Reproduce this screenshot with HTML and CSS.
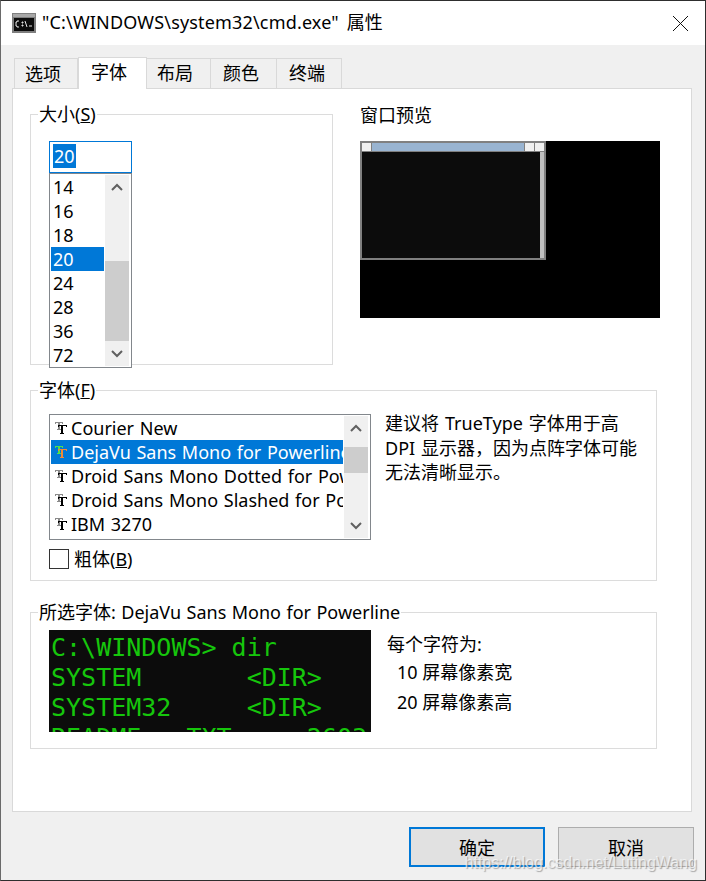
FILE: index.html
```html
<!DOCTYPE html>
<html lang="zh-CN">
<head>
<meta charset="utf-8">
<title>"C:\WINDOWS\system32\cmd.exe" 属性</title>
<link rel="stylesheet" href="styles.css">
</head>
<body>
<div class="window">
  <header class="titlebar">
    <svg class="app-icon" width="24" height="20" viewBox="0 0 24 20"><rect width="24" height="20" fill="#7f7f7f"/><rect x="1" y="1" width="22" height="3" fill="#a8a8a8"/><rect x="2" y="5" width="20" height="13" fill="#0c0c0c"/><path d="M7 8H5v1H4v4h1v1h2M10 9h1v1h-1zM10 12h1v1h-1zM13 8l2 6M17 13h3" stroke="#e8e8e8" stroke-width="1" fill="none"/></svg>
    <span class="title-text">"C:\WINDOWS\system32\cmd.exe" 属性</span>
    <svg class="close" width="15" height="15" viewBox="0 0 15 15"><path d="M0 0l15 15M15 0L0 15" stroke="#111" stroke-width="1" fill="none"/></svg>
  </header>
  <main class="content">
    <nav class="tabs">
      <div class="tab tab-1">选项</div>
      <div class="tab tab-2 active">字体</div>
      <div class="tab tab-3">布局</div>
      <div class="tab tab-4">颜色</div>
      <div class="tab tab-5">终端</div>
    </nav>
    <section class="panel">
      <div class="top-row">
        <div class="group size-group">
          <span class="legend">大小(<u>S</u>)</span>
          <div class="size-input"><span class="sel-text">20</span></div>
          <div class="listbox size-list">
            <div class="items size-items">
              <div class="item">14</div>
              <div class="item">16</div>
              <div class="item">18</div>
              <div class="item selected">20</div>
              <div class="item">24</div>
              <div class="item">28</div>
              <div class="item">36</div>
              <div class="item">72</div>
            </div>
            <div class="scrollbar">
              <svg class="arrow" width="24" height="24" viewBox="0 0 24 24"><path d="M7 15l5-5 5 5" class="chev"/></svg>
              <div class="track size-track"><div class="thumb size-thumb"></div></div>
              <svg class="arrow" width="24" height="24" viewBox="0 0 24 24"><path d="M7 9l5 5 5-5" class="chev"/></svg>
            </div>
          </div>
        </div>
        <div class="preview-col">
          <div class="preview-label">窗口预览</div>
          <div class="screen">
            <div class="mini-window">
              <div class="mini-title">
                <span class="mini-btn"></span><span class="mini-caption"></span><span class="mini-btn"></span><span class="mini-btn"></span>
              </div>
              <div class="mini-body"><div class="mini-console"></div><div class="mini-scroll"></div></div>
            </div>
          </div>
        </div>
      </div>

      <div class="group font-group">
        <span class="legend">字体(<u>F</u>)</span>
        <div class="font-row">
          <div class="font-left">
            <div class="listbox font-list">
              <div class="items font-items">
                <div class="item font-item"><svg class="tt" width="12" height="12" viewBox="0 0 12 12"><path class="tt-back" d="M0 0h8v2H7V1H5v6h1v1H2V7h1V1H1v1H0z"/><path class="tt-front" d="M3 3h9v2h-1V4H8v7h1v1H5v-1h1V4H4v1H3z"/></svg><span class="font-name">Courier New</span></div>
                <div class="item font-item selected"><svg class="tt" width="12" height="12" viewBox="0 0 12 12"><path class="tt-back" d="M0 0h8v2H7V1H5v6h1v1H2V7h1V1H1v1H0z"/><path class="tt-front" d="M3 3h9v2h-1V4H8v7h1v1H5v-1h1V4H4v1H3z"/></svg><span class="font-name">DejaVu Sans Mono for Powerline</span></div>
                <div class="item font-item"><svg class="tt" width="12" height="12" viewBox="0 0 12 12"><path class="tt-back" d="M0 0h8v2H7V1H5v6h1v1H2V7h1V1H1v1H0z"/><path class="tt-front" d="M3 3h9v2h-1V4H8v7h1v1H5v-1h1V4H4v1H3z"/></svg><span class="font-name">Droid Sans Mono Dotted for Powerline</span></div>
                <div class="item font-item"><svg class="tt" width="12" height="12" viewBox="0 0 12 12"><path class="tt-back" d="M0 0h8v2H7V1H5v6h1v1H2V7h1V1H1v1H0z"/><path class="tt-front" d="M3 3h9v2h-1V4H8v7h1v1H5v-1h1V4H4v1H3z"/></svg><span class="font-name">Droid Sans Mono Slashed for Powerline</span></div>
                <div class="item font-item"><svg class="tt" width="12" height="12" viewBox="0 0 12 12"><path class="tt-back" d="M0 0h8v2H7V1H5v6h1v1H2V7h1V1H1v1H0z"/><path class="tt-front" d="M3 3h9v2h-1V4H8v7h1v1H5v-1h1V4H4v1H3z"/></svg><span class="font-name">IBM 3270</span></div>
              </div>
              <div class="scrollbar">
                <svg class="arrow" width="24" height="24" viewBox="0 0 24 24"><path d="M7 15l5-5 5 5" class="chev"/></svg>
                <div class="track font-track"><div class="thumb font-thumb"></div></div>
                <svg class="arrow" width="24" height="24" viewBox="0 0 24 24"><path d="M7 9l5 5 5-5" class="chev"/></svg>
              </div>
            </div>
            <div class="check-row"><span class="checkbox"></span><span>粗体(<u>B</u>)</span></div>
          </div>
          <p class="hint">建议将 TrueType 字体用于高<br>DPI 显示器，因为点阵字体可能<br>无法清晰显示。</p>
        </div>
      </div>

      <div class="group sample-group">
        <span class="legend legend-wide">所选字体: DejaVu Sans Mono for Powerline</span>
        <div class="sample-row">
          <pre class="terminal">C:\WINDOWS&gt; dir
SYSTEM       &lt;DIR&gt;
SYSTEM32     &lt;DIR&gt;
README   TXT     2603</pre>
          <div class="metrics">
            <div class="metric-head">每个字符为:</div>
            <div class="metric">10 屏幕像素宽</div>
            <div class="metric">20 屏幕像素高</div>
          </div>
        </div>
      </div>
    </section>
    <footer class="buttons">
      <div class="btn primary">确定</div>
      <div class="btn">取消</div>
    </footer>
  </main>
  <div class="watermark">https://blog.csdn.net/LutingWang</div>
</div>
</body>
</html>
```
FILE: styles.css
```css
* { box-sizing: border-box; }
html, body { margin: 0; padding: 0; }
body {
  width: 706px;
  height: 881px;
  overflow: hidden;
  background: #fff;
  color: #000;
  font-family: "Noto Sans", "Noto Sans CJK SC", sans-serif;
  font-size: 18px;
  line-height: 24px;
}
.window {
  position: relative;
  width: 706px;
  height: 881px;
  border: 1px solid #2e2e2e;
  border-left-color: #6a6a6a;
  background: #f0f0f0;
  overflow: hidden;
}
.titlebar {
  height: 44px;
  background: #fff;
  display: flex;
  align-items: center;
  padding: 0 17px 0 11px;
}
.app-icon { flex: none; }
.title-text {
  margin-left: 6px;
  flex: 1;
  white-space: nowrap;
  letter-spacing: .17px;
  word-spacing: 3px;
  line-height: 22px;
  padding-bottom: 2px;
}
.close { flex: none; }
.content { padding: 12px 11px 0; }

.tabs {
  display: flex;
  align-items: flex-end;
  height: 32px;
  margin: 0 0 -1px 2px;
  position: relative;
  z-index: 1;
}
.tab {
  height: 30px;
  margin-bottom: 1px;
  border: 1px solid #d9d9d9;
  border-bottom: 0;
  border-left: 0;
  background: #f0f0f0;
  line-height: 29px;
}
.tab-1 { width: 64px; border-left: 1px solid #d9d9d9; padding-left: 10px; line-height: 30px; }
.tab-2 { width: 69px; padding-left: 12px; }
.tab-3 { width: 64px; padding-left: 10px; }
.tab-4 { width: 66px; padding-left: 12px; }
.tab-5 { width: 65px; padding-left: 12px; }
.tab.active {
  height: 32px;
  margin-bottom: 0;
  background: #fff;
  border-left: 1px solid #d9d9d9;
  line-height: 29px;
}
.panel {
  width: 680px;
  height: 724px;
  padding: 25px 17px 0;
  background: #fff;
  border: 1px solid #d9d9d9;
}

.group {
  position: relative;
  border: 1px solid #dcdcdc;
}
.legend {
  position: absolute;
  left: 7px;
  top: -13px;
  padding: 0 1px;
  background: #fff;
  white-space: nowrap;
}
.legend-wide { word-spacing: .8px; }

.top-row { display: flex; gap: 27px; }
.size-group { width: 303px; height: 251px; padding: 26px 0 0 18px; }
.size-input {
  width: 83px;
  height: 32px;
  border: 1px solid #0078d7;
  padding: 2px 0 0 3px;
  line-height: 24px;
}
.sel-text {
  display: inline-block;
  background: #0078d7;
  color: #fff;
  height: 24px;
  padding: 0 1px;
}
.listbox {
  display: flex;
  position: relative;
  border: 1px solid #82878c;
  background: #fff;
  padding: 1px 2px 1px 1px;
}
.size-list { width: 83px; height: 195px; }
.items { flex: 1; min-width: 0; overflow: hidden; }
.item {
  height: 24px;
  line-height: 24px;
  padding-left: 2px;
  white-space: nowrap;
}
.item.selected { background: #0078d7; color: #fff; }
.size-items { margin-right: 1px; }

.scrollbar {
  flex: none;
  width: 24px;
  background: #f0f0f0;
  display: flex;
  flex-direction: column;
}
.arrow { display: block; flex: none; }
.chev { fill: none; stroke: #606060; stroke-width: 2; }
.track { flex: 1; min-height: 0; }
.thumb { background: #cdcdcd; }
.size-thumb { height: 80px; margin-top: 62px; }
.font-thumb { height: 26px; margin-top: 7px; }

.preview-col { width: 300px; }
.preview-label { height: 27px; line-height: 3px; }
.screen {
  width: 300px;
  height: 177px;
  background: #000;
}
.mini-window {
  width: 186px;
  height: 119px;
  padding: 2px;
  background: #808080;
  display: flex;
  flex-direction: column;
  gap: 1px;
}
.mini-title { display: flex; height: 8px; gap: 1px; flex: none; }
.mini-btn { width: 9px; background: #f0f0f0; flex: none; }
.mini-caption { flex: 1; background: #99b4d1; }
.mini-body { flex: 1; display: flex; }
.mini-console { flex: 1; background: #0c0c0c; }
.mini-scroll { width: 4px; background: #c0c0c0; }

.font-group { width: 627px; height: 191px; margin-top: 25px; padding: 23px 0 0 18px; }
.font-row { display: flex; gap: 14px; }
.font-left { width: 322px; flex: none; }
.font-list { height: 126px; }
.font-items { margin-right: 1px; }
.font-item { display: flex; align-items: center; padding-left: 4px; }
.tt { flex: none; margin-right: 4px; }
.tt-back { fill: #8a8a8a; }
.tt-front { fill: #000; }
.selected .tt-back { fill: #4fe04f; }
.selected .tt-front { fill: #f0883a; }
.font-name { white-space: nowrap; word-spacing: 1px; }
.check-row { display: flex; align-items: center; gap: 5px; margin-top: 9px; height: 20px; }
.checkbox { width: 20px; height: 20px; border: 1px solid #333; background: #fff; flex: none; }
.hint { margin: -3px 0 0; line-height: 24.500px; white-space: nowrap; word-spacing: 1.3px; }

.sample-group { width: 627px; height: 137px; margin-top: 31px; padding: 17px 0 0 18px; }
.sample-row { display: flex; gap: 16px; }
.terminal {
  margin: 0;
  flex: none;
  width: 322px;
  height: 102px;
  overflow: hidden;
  padding: 3px 0 0 2px;
  background: #0c0c0c;
  color: #16c60c;
  font-family: "DejaVu Sans Mono", monospace;
  font-size: 25px;
  line-height: 30px;
}
.metrics { padding-top: 2px; }
.metric-head { height: 28px; }
.metric { height: 30px; padding-left: 10px; }

.buttons { display: flex; justify-content: flex-end; gap: 13px; margin-top: 15px; }
.btn {
  width: 136px;
  height: 40px;
  background: #e1e1e1;
  border: 1px solid #adadad;
  text-align: center;
  line-height: 40px;
}
.btn.primary { border: 2px solid #0078d7; line-height: 38px; }

.watermark {
  position: absolute;
  right: 8px;
  bottom: 7px;
  font-family: "Liberation Sans", sans-serif;
  font-size: 16px;
  line-height: 20px;
  color: rgba(255, 255, 255, .65);
  text-shadow: 1px 1px 1px rgba(110, 110, 110, .55);
  white-space: nowrap;
}
```
